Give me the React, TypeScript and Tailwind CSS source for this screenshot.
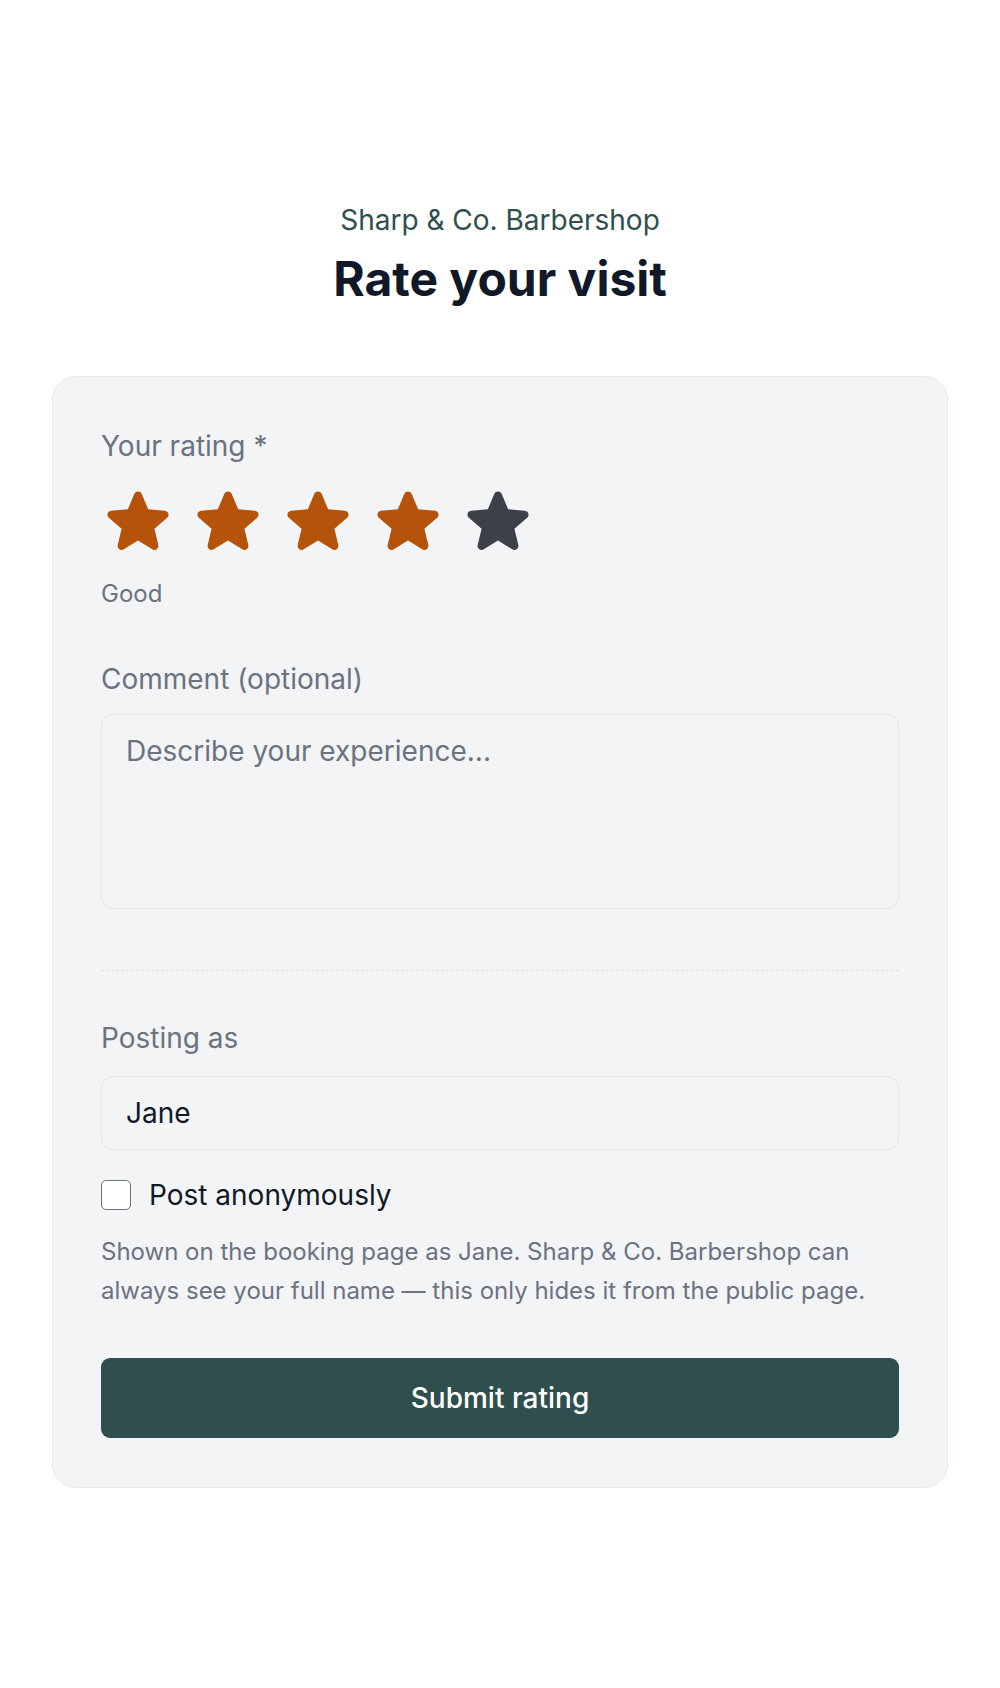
import { useState } from "react";

const STAR_PATH =
  "M10.788 3.21c.448-1.077 1.976-1.077 2.424 0l2.082 5.007 5.404.433c1.164.093 1.636 1.545.749 2.305l-4.117 3.527 1.257 5.273c.271 1.136-.964 2.033-1.96 1.425L12 18.354 7.373 21.18c-.996.608-2.231-.29-1.96-1.425l1.257-5.273-4.117-3.527c-.887-.76-.415-2.212.749-2.305l5.404-.433 2.082-5.006z";

const labels = ["Terrible", "Poor", "Okay", "Good", "Excellent"];

const Star = ({ filled, onClick }: { filled: boolean; onClick: () => void }) => {
  return (
    <button type="button" onClick={onClick} className="w-[74px] h-[74px] shrink-0 cursor-pointer">
      <svg
        viewBox="0 0 24 24"
        className={`w-[74px] h-[74px] ${filled ? "text-[#b45309]" : "text-[#3d4049]"}`}
        fill="currentColor"
      >
        <path fillRule="evenodd" clipRule="evenodd" d={STAR_PATH} />
      </svg>
    </button>
  );
};

export default function App() {
  const [rating, setRating] = useState(4);
  const [anon, setAnon] = useState(false);

  return (
    <div className="min-h-[1688px] bg-white font-['Inter',sans-serif] pt-[202px] pb-[200px]">
      <div className="flex flex-col items-center">
        <p className="text-[28px] leading-[36px] text-[#2f4f4f]">Sharp &amp; Co. Barbershop</p>
        <h1 className="mt-[13px] text-[48px] leading-[56px] font-bold text-[#111827]">Rate your visit</h1>
      </div>

      <div className="mt-[69px] mx-auto w-[896px] rounded-[24px] border-[1.5px] border-[#e5e7eb] bg-[#f3f4f6] px-[48px] pt-[49px] pb-[49px]">
        <p className="text-[28px] leading-[40px] text-[#6b7280]">Your rating *</p>
        <div className="mt-[18px] flex flex-row gap-[16px]">
          {[1, 2, 3, 4, 5].map((n) => (
            <Star key={n} filled={n <= rating} onClick={() => setRating(n)} />
          ))}
        </div>
        <p className="mt-[21px] text-[24px] leading-[30px] text-[#6b7280]">{labels[rating - 1]}</p>

        <p className="mt-[50px] text-[28px] leading-[40px] text-[#6b7280]">Comment (optional)</p>
        <textarea
          placeholder="Describe your experience..."
          className="mt-[15px] block w-full h-[195px] resize-none rounded-[12px] border-[1.5px] border-[#e5e7eb] bg-[#f3f4f6] px-[24px] py-[16px] text-[28px] leading-[40px] text-[#111827] placeholder:text-[#6b7280] outline-none"
        />

        <div className="mt-[61px] border-t-[1.5px] border-dashed border-[#dde0e4]" />

        <p className="mt-[47px] text-[28px] leading-[40px] text-[#6b7280]">Posting as</p>
        <input
          type="text"
          defaultValue="Jane"
          className="mt-[18px] block w-full h-[74px] rounded-[12px] border-[1.5px] border-[#e5e7eb] bg-[#f3f4f6] px-[24px] text-[28px] leading-[40px] text-[#111827] outline-none"
        />

        <div className="mt-[25px] flex flex-row items-center gap-[18px] h-[40px]">
          <input
            id="anon"
            type="checkbox"
            checked={anon}
            onChange={(e) => setAnon(e.target.checked)}
            className="appearance-none w-[30px] h-[30px] shrink-0 rounded-[5px] border-[1.5px] border-[#6b7280] bg-white checked:bg-[#2f4f4f] checked:border-[#2f4f4f] cursor-pointer"
          />
          <span
            className="text-[28px] leading-[40px] text-[#111827] cursor-pointer"
            onClick={() => setAnon(!anon)}
          >
            Post anonymously
          </span>
        </div>

        <p className="mt-[17px] text-[24px] leading-[39.4px] text-[#6b7280]">
          Shown on the booking page as {anon ? "Anonymous" : "Jane"}. Sharp &amp; Co. Barbershop can always see your
          full name — this only hides it from the public page.
        </p>

        <button
          type="button"
          className="mt-[47px] w-full h-[80px] rounded-[9px] bg-[#2f4f4f] text-[28px] font-medium text-white"
        >
          Submit rating
        </button>
      </div>
    </div>
  );
}
